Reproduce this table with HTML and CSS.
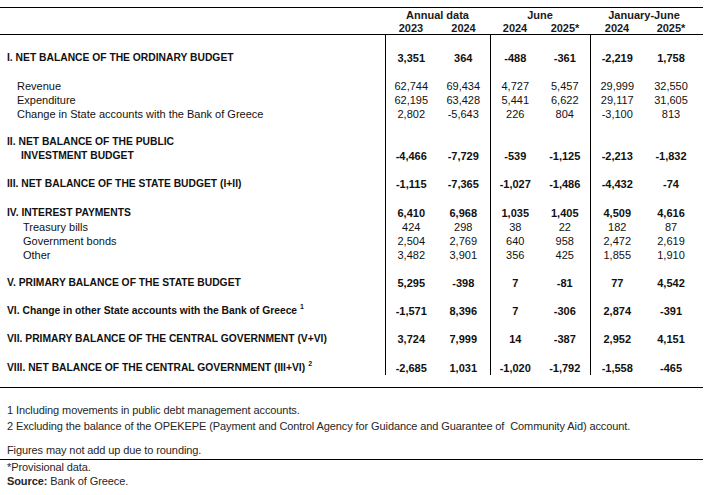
FILE: index.html
```html
<!DOCTYPE html>
<html>
<head>
<meta charset="utf-8">
<link rel="stylesheet" href="styles.css">
</head>
<body>
<div class="sheet">
<table class="budget">
  <colgroup>
    <col class="c-label"><col class="c-a1"><col class="c-a2"><col class="c-j1"><col class="c-j2"><col class="c-h1"><col class="c-h2">
  </colgroup>
  <thead>
    <tr class="h1">
      <th></th>
      <th colspan="2">Annual data</th>
      <th colspan="2">June</th>
      <th colspan="2" class="last">January-June</th>
    </tr>
    <tr class="h2">
      <th></th>
      <th>2023</th><th>2024</th><th>2024</th><th>2025*</th><th>2024</th><th class="last">2025*</th>
    </tr>
  </thead>
  <tbody>
    <tr class="blank first"><td></td><td class="g"></td><td></td><td class="g"></td><td></td><td class="g"></td><td></td></tr>
    <tr class="b"><td class="lab">I. NET BALANCE OF THE ORDINARY BUDGET</td><td class="g">3,351</td><td>364</td><td class="g">-488</td><td>-361</td><td class="g">-2,219</td><td class="last">1,758</td></tr>
    <tr class="blank"><td></td><td class="g"></td><td></td><td class="g"></td><td></td><td class="g"></td><td></td></tr>
    <tr><td class="lab sub">Revenue</td><td class="g">62,744</td><td>69,434</td><td class="g">4,727</td><td>5,457</td><td class="g">29,999</td><td class="last">32,550</td></tr>
    <tr><td class="lab sub">Expenditure</td><td class="g">62,195</td><td>63,428</td><td class="g">5,441</td><td>6,622</td><td class="g">29,117</td><td class="last">31,605</td></tr>
    <tr><td class="lab sub">Change in State accounts with the Bank of Greece</td><td class="g">2,802</td><td>-5,643</td><td class="g">226</td><td>804</td><td class="g">-3,100</td><td class="last">813</td></tr>
    <tr class="blank"><td></td><td class="g"></td><td></td><td class="g"></td><td></td><td class="g"></td><td></td></tr>
    <tr class="b"><td class="lab">II. NET BALANCE OF THE PUBLIC</td><td class="g"></td><td></td><td class="g"></td><td></td><td class="g"></td><td></td></tr>
    <tr class="b"><td class="lab cont">INVESTMENT BUDGET</td><td class="g">-4,466</td><td>-7,729</td><td class="g">-539</td><td>-1,125</td><td class="g">-2,213</td><td class="last">-1,832</td></tr>
    <tr class="blank"><td></td><td class="g"></td><td></td><td class="g"></td><td></td><td class="g"></td><td></td></tr>
    <tr class="b"><td class="lab">III. NET BALANCE OF THE STATE BUDGET (I+II)</td><td class="g">-1,115</td><td>-7,365</td><td class="g">-1,027</td><td>-1,486</td><td class="g">-4,432</td><td class="last">-74</td></tr>
    <tr class="blank"><td></td><td class="g"></td><td></td><td class="g"></td><td></td><td class="g"></td><td></td></tr>
    <tr class="b"><td class="lab">IV. INTEREST PAYMENTS</td><td class="g">6,410</td><td>6,968</td><td class="g">1,035</td><td>1,405</td><td class="g">4,509</td><td class="last">4,616</td></tr>
    <tr><td class="lab sub2">Treasury bills</td><td class="g">424</td><td>298</td><td class="g">38</td><td>22</td><td class="g">182</td><td class="last">87</td></tr>
    <tr><td class="lab sub2">Government bonds</td><td class="g">2,504</td><td>2,769</td><td class="g">640</td><td>958</td><td class="g">2,472</td><td class="last">2,619</td></tr>
    <tr><td class="lab sub2">Other</td><td class="g">3,482</td><td>3,901</td><td class="g">356</td><td>425</td><td class="g">1,855</td><td class="last">1,910</td></tr>
    <tr class="blank"><td></td><td class="g"></td><td></td><td class="g"></td><td></td><td class="g"></td><td></td></tr>
    <tr class="b"><td class="lab">V. PRIMARY BALANCE OF THE STATE BUDGET</td><td class="g">5,295</td><td>-398</td><td class="g">7</td><td>-81</td><td class="g">77</td><td class="last">4,542</td></tr>
    <tr class="blank"><td></td><td class="g"></td><td></td><td class="g"></td><td></td><td class="g"></td><td></td></tr>
    <tr class="b"><td class="lab">VI. Change in other State accounts with the Bank of Greece<sup>1</sup></td><td class="g">-1,571</td><td>8,396</td><td class="g">7</td><td>-306</td><td class="g">2,874</td><td class="last">-391</td></tr>
    <tr class="blank"><td></td><td class="g"></td><td></td><td class="g"></td><td></td><td class="g"></td><td></td></tr>
    <tr class="b"><td class="lab">VII. PRIMARY BALANCE OF THE CENTRAL GOVERNMENT (V+VI)</td><td class="g">3,724</td><td>7,999</td><td class="g">14</td><td>-387</td><td class="g">2,952</td><td class="last">4,151</td></tr>
    <tr class="blank"><td></td><td class="g"></td><td></td><td class="g"></td><td></td><td class="g"></td><td></td></tr>
    <tr class="b"><td class="lab">VIII. NET BALANCE OF THE CENTRAL GOVERNMENT (III+VI)<sup>2</sup></td><td class="g">-2,685</td><td>1,031</td><td class="g">-1,020</td><td>-1,792</td><td class="g">-1,558</td><td class="last">-465</td></tr>
    <tr class="tail"><td colspan="7"></td></tr>
  </tbody>
</table>
<div class="notes">
  <p class="note">1 Including movements in public debt management accounts.</p>
  <p class="note">2 Excluding the balance of the OPEKEPE (Payment and Control Agency for Guidance and Guarantee of&nbsp; Community Aid) account.</p>
  <p class="note round">Figures may not add up due to rounding.</p>
</div>
<div class="source">
  <p class="note">*Provisional data.</p>
  <p class="note"><b>Source:</b> Bank of Greece.</p>
</div>
</div>
</body>
</html>
```
FILE: styles.css
```css
html, body {
  margin: 0;
  padding: 0;
  background: #fff;
}
.sheet {
  width: 703px;
  padding-top: 7px;
  font-family: "Liberation Sans", Arial, sans-serif;
  font-size: 11px;
  color: #111;
}
.budget {
  width: 703px;
  table-layout: fixed;
  border-collapse: collapse;
  border-top: 1px solid #000;
}
.c-label { width: 385px; }
.c-a1 { width: 52px; }
.c-a2 { width: 53px; }
.c-j1 { width: 50px; }
.c-j2 { width: 50px; }
.c-h1 { width: 54px; }
.c-h2 { width: 59px; }
.budget th,
.budget td {
  padding: 0;
  height: 14.1px;
  line-height: 14px;
  text-align: center;
  white-space: nowrap;
  vertical-align: middle;
}
.budget th {
  font-weight: bold;
  color: #1a1a1a;
}
.budget .h1 th { height: 14px; }
.budget .h2 th { height: 12px; line-height: 12px; border-bottom: 1px solid #000; }
.budget .blank td { height: 14.1px; }
.budget .blank.first td { height: 15.5px; }
.budget td.g { border-left: 1px solid #000; }
.budget .last { padding-right: 5px; }
.budget tr.b td { font-weight: bold; }
.budget td.lab {
  text-align: left;
  padding-left: 7px;
}
.budget tr.b td.lab { font-size: 10.3px; }
.budget td.sub { padding-left: 17px; }
.budget td.sub2 { padding-left: 23px; }
.budget td.cont { padding-left: 21px; }
.budget sup {
  font-size: 7px;
  line-height: 0;
  vertical-align: 5px;
  margin-left: 3px;
}
.budget .tail td { height: 12px; border-bottom: 1px solid #000; }
.notes {
  padding-top: 14px;
  padding-bottom: 1px;
  border-bottom: 1px solid #000;
}
.note {
  margin: 0;
  padding-left: 7px;
  font-family: "Liberation Sans", Arial, sans-serif;
  font-size: 11px;
  letter-spacing: -0.1px;
  line-height: 16px;
  color: #262626;
  white-space: nowrap;
}
.note.round { margin-top: 8px; }
.source .note { line-height: 14px; }
```
